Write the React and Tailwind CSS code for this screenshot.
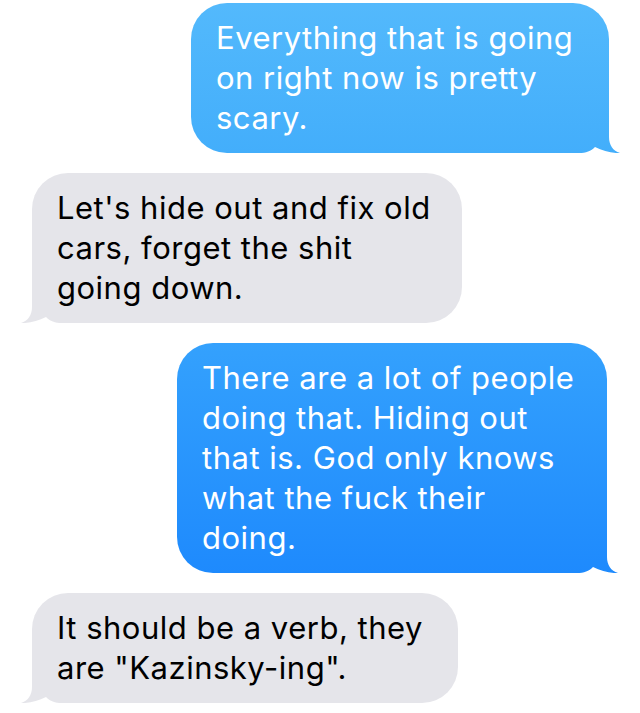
const messages = [
  {
    from: "me",
    lines: ["Everything that is going", "on right now is pretty", "scary."],
    width: "w-[418px]",
    bg: "bg-[linear-gradient(to_bottom,#53b9fc,#43aefb)]",
    top: "#53b9fc",
    bottom: "#43aefb",
    edge: "mr-[31px]",
  },
  {
    from: "them",
    lines: ["Let's hide out and fix old", "cars, forget the shit", "going down."],
    width: "w-[430px]",
    bg: "bg-[#e5e5ea]",
    top: "#e5e5ea",
    bottom: "#e5e5ea",
    edge: "ml-[32px]",
  },
  {
    from: "me",
    lines: [
      "There are a lot of people",
      "doing that. Hiding out",
      "that is. God only knows",
      "what the fuck their",
      "doing.",
    ],
    width: "w-[430px]",
    bg: "bg-[linear-gradient(to_bottom,#34a1fd,#1e8afd)]",
    top: "#34a1fd",
    bottom: "#1e8afd",
    edge: "mr-[33px]",
  },
  {
    from: "them",
    lines: ["It should be a verb, they", 'are "Kazinsky-ing".'],
    width: "w-[426px]",
    bg: "bg-[#e5e5ea]",
    top: "#e5e5ea",
    bottom: "#e5e5ea",
    edge: "ml-[32px]",
  },
];

// hook at the bottom corner; the fill follows the bubble's own gradient
const Tail = ({ msg, id, height }) => (
  <svg
    width="47"
    height="36"
    viewBox="0 0 47 36"
    className={
      msg.from === "me"
        ? "absolute bottom-0 right-[-11px]"
        : "absolute bottom-0 left-[-11px] -scale-x-100"
    }
  >
    <defs>
      <linearGradient id={id} gradientUnits="userSpaceOnUse" x1="0" y1={36 - height} x2="0" y2="36">
        <stop offset="0" stopColor={msg.top} />
        <stop offset="1" stopColor={msg.bottom} />
      </linearGradient>
    </defs>
    <path
      d="M0,0 H36 V20 C36,28 40,34 47,36 C39,36.5 30,34 22,30 C18,34 13,36 6,36 H0 Z"
      fill={`url(#${id})`}
    />
  </svg>
);

const Bubble = ({ msg, index }) => {
  const isMe = msg.from === "me";
  const height = msg.lines.length * 40 + 30;
  return (
    <div className={`flex ${isMe ? "justify-end" : "justify-start"}`}>
      <div
        className={`relative ${msg.width} ${msg.edge} ${msg.bg} rounded-[36px] pl-[25px] pr-[18px] pt-[15px] pb-[15px]`}
      >
        <Tail msg={msg} id={`tail-${index}`} height={height} />
        <p
          className={`relative text-[31px] leading-[40px] tracking-[0.5px] whitespace-nowrap ${
            isMe ? "text-white" : "text-black"
          }`}
        >
          {msg.lines.map((line, i) => (
            <span key={i}>
              {line}
              {i < msg.lines.length - 1 && <br />}
            </span>
          ))}
        </p>
      </div>
    </div>
  );
};

export default function App() {
  return (
    <div
      className="w-[640px] h-[713px] bg-white pt-[3px] flex flex-col gap-[20px] overflow-hidden"
      style={{ fontFamily: "Inter, 'Noto Sans', sans-serif" }}
    >
      {messages.map((m, i) => (
        <Bubble key={i} msg={m} index={i} />
      ))}
    </div>
  );
}
